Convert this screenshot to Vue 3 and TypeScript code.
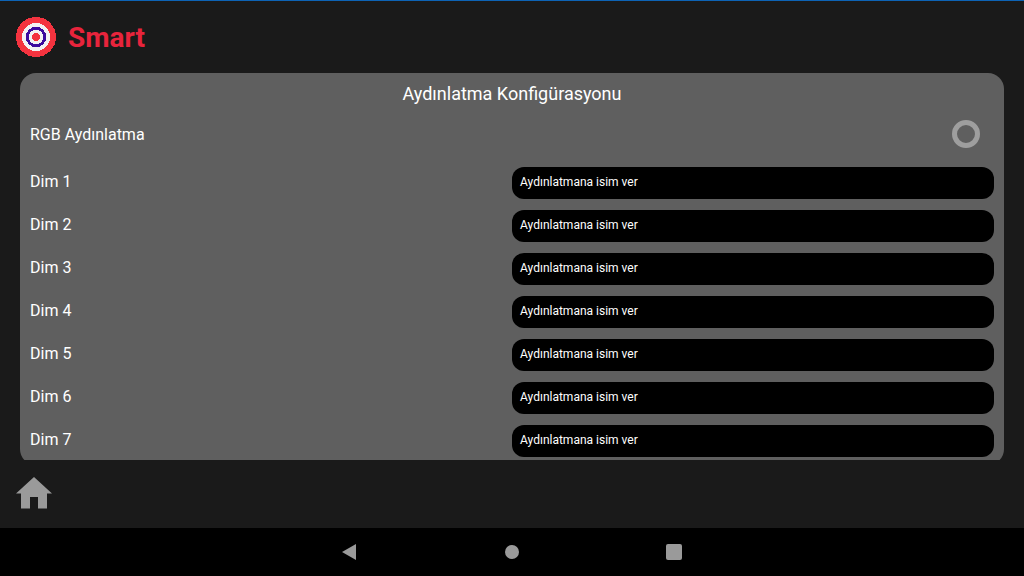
<script setup lang="ts">
const dims: string[] = ['Dim 1', 'Dim 2', 'Dim 3', 'Dim 4', 'Dim 5', 'Dim 6', 'Dim 7']
</script>

<template>
  <div class="screen">
    <div class="app">
      <header class="top">
        <svg class="logo" width="40" height="40" viewBox="0 0 40 40" shape-rendering="crispEdges">
          <circle cx="20" cy="20" r="20" fill="#f4333f" />
          <circle cx="20" cy="20" r="14" fill="#f2f2f2" />
          <circle cx="20" cy="20" r="8.8" fill="none" stroke="#3c0a9e" stroke-width="2.8" />
          <circle cx="20" cy="20" r="4.2" fill="#f4333f" />
        </svg>
        <span class="brand">Smart</span>
      </header>
      <div class="scroller">
        <main class="card">
          <h1 class="title">Aydınlatma Konfigürasyonu</h1>
          <div class="rgb">
            <span class="label rgb-label">RGB Aydınlatma</span>
            <span class="ring"></span>
          </div>
          <div class="rows">
            <div v-for="d in dims" :key="d" class="row">
              <span class="label dim-label">{{ d }}</span>
              <div class="field">Aydınlatmana isim ver</div>
            </div>
          </div>
        </main>
      </div>
      <footer class="bottom">
        <svg width="36" height="32" viewBox="0 0 36 32">
          <path d="M18 0 L36 16.5 H31 V31.5 H22 V20 H14 V31.5 H5 V16.5 H0 Z" fill="#9a9a9a" />
        </svg>
      </footer>
    </div>
    <nav class="nav">
      <svg class="back" width="14" height="16" viewBox="0 0 14 16"><path d="M0 8 L14 0 V16 Z" fill="#9a9a9a" /></svg>
      <span class="dot"></span>
      <span class="sq"></span>
    </nav>
  </div>
</template>

<style scoped>
.screen {
  width: 1024px;
  height: 576px;
  display: flex;
  flex-direction: column;
  font-family: Roboto, "Liberation Sans", sans-serif;
  color: #fff;
  background: #1a1a1a;
  overflow: hidden;
}
.app {
  height: 528px;
  flex: none;
  display: flex;
  flex-direction: column;
  border-top: 1px solid #0d63b5;
  box-sizing: border-box;
}
.top {
  height: 72px;
  flex: none;
  display: flex;
  align-items: center;
  gap: 12px;
  padding-left: 16px;
}
.logo { flex: none; }
.brand {
  font-size: 28px;
  font-weight: 700;
  color: #e8243c;
}
.scroller {
  height: 387px;
  flex: none;
  margin: 0 20px;
  overflow: hidden;
}
.card {
  height: 392px;
  background: #5f5f5f;
  border-radius: 16px;
  padding: 0 10px;
  box-sizing: border-box;
}
.title {
  margin: 0;
  padding-top: 9px;
  height: 41px;
  box-sizing: border-box;
  font-size: 18px;
  line-height: 24px;
  font-weight: 400;
  text-align: center;
}
.label {
  font-size: 16px;
  line-height: 20px;
}
.rgb-label { padding-top: 2px; }
.dim-label { padding-bottom: 2px; }
.rgb {
  height: 40px;
  display: flex;
  align-items: center;
  justify-content: space-between;
  padding-right: 14px;
}
.ring {
  width: 28px;
  height: 28px;
  box-sizing: border-box;
  border: 5px solid #9e9e9e;
  border-radius: 50%;
}
.rows {
  margin-top: 13px;
  display: flex;
  flex-direction: column;
  gap: 11px;
}
.row {
  height: 32px;
  display: flex;
  align-items: center;
  justify-content: space-between;
}
.field {
  width: 482px;
  height: 32px;
  background: #000;
  border-radius: 12px;
  padding-left: 8px;
  box-sizing: border-box;
  font-size: 12px;
  line-height: 30px;
}
.bottom {
  flex: 1;
  display: flex;
  align-items: center;
  padding: 0 0 2px 16px;
}
.nav {
  height: 48px;
  flex: none;
  background: #000;
  display: flex;
  align-items: center;
  padding-left: 342px;
}
.back { flex: none; }
.dot {
  width: 14px;
  height: 14px;
  margin-left: 149px;
  border-radius: 50%;
  background: #9a9a9a;
}
.sq {
  width: 16px;
  height: 16px;
  margin-left: 147px;
  border-radius: 2px;
  background: #9a9a9a;
}
</style>

<style>
html, body { margin: 0; background: #1a1a1a; }
</style>
